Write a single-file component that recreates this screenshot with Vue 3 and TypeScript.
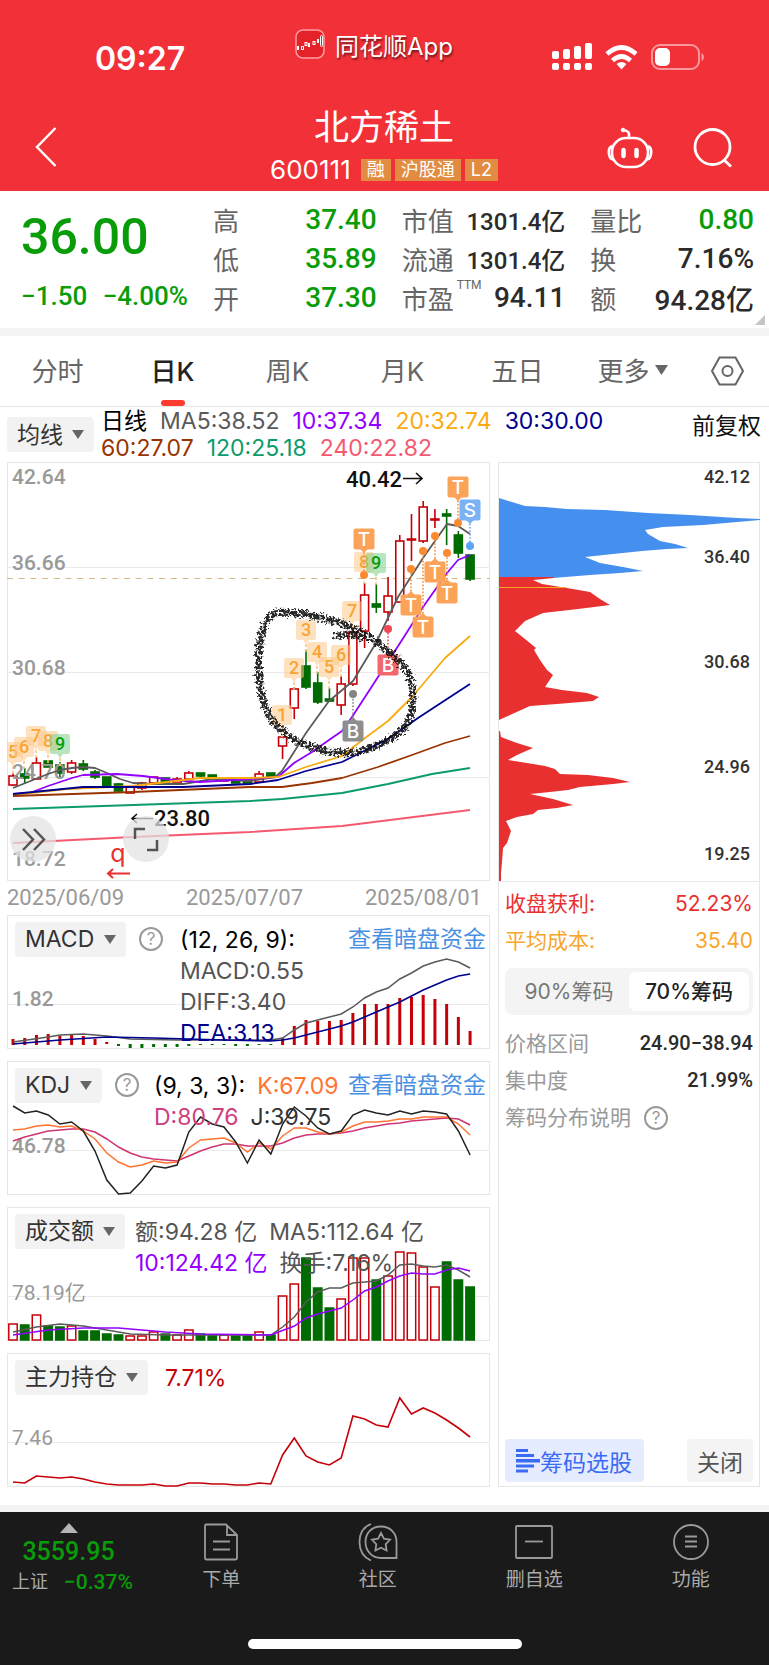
<script setup lang="ts">
import { ref } from 'vue'

type Pair = [number, number]

const STEP = 11.72
const x = (i: number): number => 6 + i * STEP
const series = (pts: Pair[]): string => pts.map(([i, y]) => `${x(i).toFixed(1)},${y}`).join(' ')
const run = (ys: number[]): string => series(ys.map((y, i): Pair => [i, y]))

const tabs: string[] = ['分时', '日K', '周K', '月K', '五日', '更多']
const activeTab = ref('日K')
const chipRange = ref('70')

const stats = [
  [['高', '37.40', 'down'], ['低', '35.89', 'down'], ['开', '37.30', 'down']],
  [['市值', '1301.4亿', 'small'], ['流通', '1301.4亿', 'small'], ['市盈', '94.11', '']],
  [['量比', '0.80', 'down'], ['换', '7.16%', ''], ['额', '94.28亿', '']],
]

// up flag, body top, body bottom, high, low
const candles: [boolean, number, number, number, number][] = [
  [true, 314, 323, 311, 324], [false, 312, 316, 306, 321], [true, 301, 317, 295, 317],
  [false, 299, 305, 299, 305], [false, 303, 311, 300, 315], [true, 301, 310, 298, 312],
  [false, 302, 307, 298, 309], [false, 310, 315, 308, 317], [false, 315, 324, 315, 324],
  [false, 322, 329, 321, 330], [true, 325, 331, 325, 331], [true, 321, 326, 320, 328],
  [true, 315, 321, 315, 321], [false, 316, 322, 316, 322], [true, 317, 321, 315, 321],
  [true, 311, 317, 309, 317], [false, 311, 314, 311, 315], [false, 313, 317, 313, 317],
  [true, 317, 319, 317, 319], [false, 317, 321, 317, 321], [false, 318, 321, 318, 321],
  [true, 312, 320, 309, 320], [false, 311, 315, 311, 315], [true, 275, 284, 274, 297],
  [true, 227, 246, 225, 257], [false, 204, 225, 188, 227], [false, 221, 240, 210, 242],
  [false, 237, 239, 226, 240], [true, 222, 243, 214, 253], [true, 170, 222, 170, 224],
  [true, 133, 169, 121, 186], [false, 142, 145, 122, 151], [true, 134, 150, 115, 159],
  [true, 79, 140, 73, 140], [true, 77, 78, 52, 99], [true, 45, 79, 39, 81],
  [true, 57, 58, 47, 66], [false, 52, 54, 47, 83], [false, 73, 91, 69, 96],
  [false, 93, 117, 93, 119],
]

const averages = [
  { color: '#5a5a5a', pts: '6,326 41,312 53,308 65,306 76,305 88,306 100,311 113,317 126,321 143,322 176,322 206,317 243,319 268,315 275,309 299,271 322,239 346,219 369,181 391,135 416,96 440,62 451,64 463,72' },
  { color: '#9400ff', pts: '6,332 23,331 41,324 65,316 76,313 110,312 136,314 166,318 193,320 243,317 271,315 287,301 305,290 322,278 335,269 345,255 358,235 371,215 395,178 416,145 440,111 451,98 463,93' },
  { color: '#f9ab10', pts: '6,333 60,327 126,324 160,320 193,316 243,316 271,315 299,305 335,294 358,276 381,259 405,235 438,196 463,174' },
  { color: '#00008f', pts: '6,332 76,325 126,325 176,325 243,322 271,318 299,309 335,300 381,277 411,256 440,237 463,222' },
  { color: '#993300', pts: '6,334 126,330 243,325 275,325 305,321 335,316 371,305 405,293 438,281 463,274' },
  { color: '#0c9b6a', pts: '6,347 126,343 243,339 275,337 335,331 381,322 425,312 463,306' },
  { color: '#f5596f', pts: '6,381 126,375 243,370 335,364 391,357 463,348' },
]

const legend: [string, string][] = [
  ['日线', '#000'], ['MA5:38.52', '#5a5a5a'], ['10:37.34', '#9400ff'], ['20:32.74', '#f9ab10'],
  ['30:30.00', '#00008f'], ['60:27.07', '#993300'], ['120:25.18', '#0c9b6a'], ['240:22.82', '#f5596f'],
]

const axis: [string, number][] = [['42.64', 22], ['36.66', 108], ['30.68', 213], ['24.70', 317], ['18.72', 404]]

const counts: [number, number, number][] = [
  [5, 6, 290], [6, 17, 285], [7, 29, 274], [8, 41, 279], [9, 53, 282],
  [1, 275, 253], [2, 287, 206], [3, 299, 168], [4, 310, 190], [5, 322, 205],
  [6, 334, 193], [7, 345, 149], [8, 357, 100], [9, 369, 101],
]

const trades: { t: string; x: number; y: number; dot: number; c: string; d: string }[] = [
  { t: 'T', x: 357, y: 77, dot: 113, c: '#fca35a', d: '#fb8b32' },
  { t: 'T', x: 451, y: 25, dot: 61, c: '#fca35a', d: '#fb8b32' },
  { t: 'S', x: 463, y: 48, dot: 84, c: '#7bb1f5', d: '#5da3f5' },
  { t: 'T', x: 404, y: 143, dot: 107, c: '#fca35a', d: '#fb8b32' },
  { t: 'T', x: 416, y: 165, dot: 89, c: '#fca35a', d: '#fb8b32' },
  { t: 'T', x: 428, y: 110, dot: 74, c: '#fca35a', d: '#fb8b32' },
  { t: 'T', x: 440, y: 131, dot: 91, c: '#fca35a', d: '#fb8b32' },
  { t: 'B', x: 381, y: 203, dot: 167, c: '#f2686c', d: '#f04855' },
  { t: 'B', x: 346, y: 269, dot: 232, c: '#8e8e8e', d: '#858585' },
]

const chipAxis: [string, number][] = [['42.12', 21], ['36.40', 101], ['30.68', 206], ['24.96', 311], ['19.25', 398]]

const macdBars: [number, number, boolean][] = [
  [124, 130, true], [123, 130, true], [120, 130, true], [119, 130, true], [121, 130, true], [120, 130, true],
  [121, 130, true], [124, 130, true], [127, 129, true],
  [129, 131, false], [129, 133, false], [129, 133, false], [129, 132, false], [129, 132, false], [129, 132, false],
  [129, 131, false], [129, 130, false], [129, 130, false], [129, 130, false], [129, 131, false], [129, 131, false],
  [129, 130, false], [129, 130, false],
  [123, 130, true], [111, 130, true], [105, 130, true], [106, 130, true], [106, 130, true], [105, 130, true],
  [98, 130, true], [89, 130, true], [89, 130, true], [89, 130, true], [83, 130, true], [82, 130, true],
  [80, 130, true], [84, 130, true], [89, 130, true], [102, 130, true], [116, 130, true],
]
const diff = series([[0, 127], [3, 122], [4, 120], [6, 119], [8, 121], [10, 124], [14, 125], [22, 125], [23, 123], [24, 115], [25, 108], [26, 105], [27, 102], [28, 99], [29, 92], [30, 83], [31, 77], [32, 73], [33, 64], [34, 58], [35, 51], [36, 47], [37, 44], [38, 47], [39, 53]])
const dea = series([[0, 129], [4, 125], [8, 122], [12, 123], [18, 125], [22, 126], [23, 125], [24, 123], [25, 120], [26, 117], [27, 114], [28, 111], [29, 107], [30, 102], [31, 97], [32, 92], [33, 87], [34, 81], [35, 75], [36, 70], [37, 65], [38, 61], [39, 59]])

const kdjJ = run([45, 52, 50, 54, 63, 61, 70, 90, 119, 133, 132, 120, 105, 107, 104, 71, 56, 63, 66, 81, 102, 79, 93, 63, 46, 55, 67, 73, 70, 54, 49, 52, 54, 50, 53, 50, 51, 53, 70, 94])
const kdjK = run([69, 68, 65, 64, 66, 65, 70, 78, 92, 101, 106, 104, 100, 102, 101, 87, 79, 78, 77, 82, 91, 82, 88, 75, 67, 67, 71, 73, 71, 65, 61, 61, 60, 58, 58, 56, 56, 56, 63, 74])
const kdjD = run([80, 76, 73, 70, 69, 68, 68, 71, 78, 86, 92, 96, 98, 99, 100, 95, 90, 86, 83, 83, 85, 85, 85, 82, 77, 74, 73, 73, 72, 70, 67, 65, 63, 62, 60, 59, 58, 57, 58, 64])

const volumeTops = [117, 118, 108, 119, 120, 119, 124, 124, 127, 128, 129, 129, 125, 127, 128, 123, 127, 128, 128, 129, 129, 125, 128, 89, 77, 51, 81, 101, 92, 51, 51, 73, 69, 45, 46, 60, 80, 55, 73, 80]
const volumeUp = new Set([0, 2, 5, 10, 11, 12, 14, 15, 18, 21, 23, 24, 28, 29, 30, 32, 33, 34, 35, 36])
const volMa5 = series([[0, 125], [2, 120], [4, 117], [6, 119], [8, 123], [10, 127], [13, 128], [22, 128], [23, 120], [24, 110], [25, 95], [26, 85], [27, 81], [28, 81], [29, 76], [30, 75], [31, 74], [32, 68], [33, 58], [34, 57], [35, 59], [36, 60], [37, 58], [38, 63], [39, 70]])
const volMa10 = series([[0, 128], [3, 123], [6, 121], [9, 121], [11, 123], [13, 125], [16, 127], [22, 128], [24, 119], [25, 111], [26, 107], [27, 104], [28, 101], [29, 93], [30, 84], [31, 80], [32, 74], [33, 69], [34, 66], [35, 67], [36, 67], [37, 63], [38, 61], [39, 64]])

const holding = run([129, 130, 123, 124, 125, 124, 126, 129, 131, 132, 132, 132, 131, 133, 133, 130, 130, 131, 131, 132, 132, 130, 131, 102, 85, 103, 109, 112, 105, 63, 66, 72, 74, 45, 61, 55, 60, 67, 75, 84])
</script>

<template>
  <div class="page">
    <header class="top">
      <div class="status">
        <span class="clock">09:27</span>
        <div class="app">
          <svg class="app-icon" viewBox="0 0 30 30" aria-hidden="true">
            <rect x="1" y="1" width="28" height="28" rx="7" fill="#e32229" stroke="#ff9ea0" stroke-width="1.5" />
            <g fill="#fff"><rect x="2" y="17" width="2" height="4" /><rect x="13" y="14" width="2" height="4" /><rect x="22" y="10" width="2" height="4" /></g>
            <g fill="none" stroke="#fff"><rect x="6.5" y="17.500" width="2" height="3" /><rect x="10" y="13.500" width="2" height="3" /><rect x="18" y="12.500" width="2" height="3" /><rect x="25.500" y="6.500" width="2" height="11" rx="1" /></g>
          </svg>
          <span>同花顺App</span>
        </div>
        <div class="signals">
          <svg width="40" height="28" viewBox="0 0 40 28" fill="#fff" aria-hidden="true">
            <rect x="0" y="8" width="7" height="8" rx="2" /><rect x="11" y="6" width="7" height="10" rx="2" />
            <rect x="22" y="3" width="7" height="13" rx="2" /><rect x="33" y="0" width="7" height="16" rx="2" />
            <rect x="0" y="20" width="7" height="7" rx="2" /><rect x="11" y="20" width="7" height="7" rx="2" />
            <rect x="22" y="20" width="7" height="7" rx="2" /><rect x="33" y="20" width="7" height="7" rx="2" />
          </svg>
          <svg width="33" height="25" viewBox="0 0 33 25" fill="none" stroke="#fff" stroke-width="4.600" aria-hidden="true">
            <path d="M2 9Q16.500-4 31 9" /><path d="M7.500 15.500Q16.500 7.500 25.500 15.500" />
            <path d="M11.500 19Q16.500 15 21.500 19L16.500 24.500Z" fill="#fff" stroke="none" />
          </svg>
          <svg width="54" height="26" viewBox="0 0 54 26" aria-hidden="true">
            <rect x="1" y="1" width="47" height="24" rx="8" fill="none" stroke="#fff" stroke-opacity=".5" stroke-width="2" />
            <rect x="4" y="4" width="15" height="18" rx="5" fill="#fff" />
            <path d="M50.500 9Q53 10 53 13T50.500 17Z" fill="#fff" fill-opacity=".5" />
          </svg>
        </div>
      </div>
      <div class="nav">
        <button class="plain back" aria-label="返回">
          <svg width="22" height="40" viewBox="0 0 22 40" fill="none" stroke="#fff" stroke-width="2.500"><path d="M20.500 1L2 20L20.500 39" /></svg>
        </button>
        <div class="title">
          <h1>北方稀土</h1>
          <p><span class="code">600111</span><i>融</i><i>沪股通</i><i>L2</i></p>
        </div>
        <div class="actions">
          <button class="plain" aria-label="智能助手">
            <svg width="46" height="42" viewBox="0 0 46 42" fill="none" stroke="#fff" stroke-width="2.600">
              <rect x="5" y="11" width="36" height="29" rx="14" /><path d="M5 19Q1 21 2 27T6 32M41 19Q45 21 44 27T40 32" />
              <path d="M22 11V7Q22 4 16 3" /><circle cx="16" cy="3" r="1.800" fill="#fff" stroke-width="1" />
              <path d="M16.500 23V29M29.500 23V29" stroke-width="4.500" stroke-linecap="round" />
            </svg>
          </button>
          <button class="plain" aria-label="搜索">
            <svg width="40" height="40" viewBox="0 0 40 40" fill="none" stroke="#fff" stroke-width="2.800"><circle cx="19.500" cy="19" r="17.500" /><path d="M31 32L38 38.500" /></svg>
          </button>
        </div>
      </div>
    </header>

    <section class="quote">
      <div class="price">
        <strong>36.00</strong>
        <p><span>−1.50</span><span>−4.00%</span></p>
      </div>
      <dl v-for="(col, c) in stats" :key="c">
        <div v-for="[k, v, kind] in col" :key="k">
          <dt>{{ k }}<sup v-if="k === '市盈'">TTM</sup></dt>
          <dd :class="kind">{{ v }}</dd>
        </div>
      </dl>
      <span class="corner"></span>
    </section>

    <nav class="tabs">
      <button v-for="t in tabs" :key="t" class="plain tab" :class="{ active: t === activeTab }" @click="activeTab = t">
        {{ t }}<svg v-if="t === '更多'" width="13" height="10" viewBox="0 0 13 10" fill="#666"><path d="M0 0H13L6.500 10Z" /></svg>
      </button>
      <button class="plain settings" aria-label="设置">
        <svg width="35" height="30" viewBox="0 0 35 30" fill="none" stroke="#666" stroke-width="2"><path d="M9.500 1.500H25.500L33 15L25.500 28.500H9.500L2 15Z" /><circle cx="17.500" cy="15" r="5" /></svg>
      </button>
    </nav>

    <div class="legend">
      <div class="drop"><select aria-label="均线类型"><option>均线</option></select><svg viewBox="0 0 12 9"><path d="M0 0H12L6 9Z" /></svg></div>
      <p class="legend-list"><span v-for="[label, color] in legend" :key="label" :style="{ color }">{{ label }}</span></p>
      <button class="plain adjust">前复权</button>
    </div>

    <main class="board">
      <div class="charts">
        <section class="frame kline">
          <svg class="plot" viewBox="0 0 483 419" role="img" aria-label="北方稀土日K线图">
            <defs>
              <filter id="rough" x="-10%" y="-10%" width="120%" height="120%">
                <feTurbulence type="fractalNoise" baseFrequency="0.4" numOctaves="3" seed="4" result="n" />
                <feDisplacementMap in="SourceGraphic" in2="n" scale="9" xChannelSelector="R" yChannelSelector="G" result="d" />
                <feColorMatrix in="n" type="matrix" values="0 0 0 0 0  0 0 0 0 0  0 0 0 0 0  0 0 6 0 -2" result="m" />
                <feComposite in="d" in2="m" operator="in" />
                <feGaussianBlur stdDeviation="0.4" />
              </filter>
            </defs>
            <g class="grid"><path d="M0 105.500H483M0 210.500H483M0 315.500H483" /></g>
            <path d="M0 116.500H483" stroke="#d6ba8a" stroke-width="1.200" stroke-dasharray="6 5.700" />
            <g v-for="([up, top, bottom, high, low], i) in candles" :key="i" :stroke="up ? '#c50008' : '#006b00'" stroke-width="1.600">
              <path :d="`M${x(i)} ${high}V${top}M${x(i)} ${bottom}V${low}`" />
              <rect :x="x(i) - 4" :y="top" width="8" :height="bottom - top" :fill="up ? '#fff' : '#006b00'" />
            </g>
            <g class="axis"><text v-for="[t, y] in axis" :key="t" x="5" :y="y">{{ t }}</text></g>
            <g fill="none" stroke-width="1.800" stroke-linejoin="round"><polyline v-for="a in averages" :key="a.color" :points="a.pts" :stroke="a.color" /></g>
            <g v-for="([n, cx, cy], i) in counts" :key="'n' + i" class="count" :class="{ nine: n === 9 }">
              <path :d="`M${cx - 8} ${cy - 10}h16q2 0 2 2v16q0 2-2 2h-5l-3 4l-3-4h-5q-2 0-2-2v-16q0-2 2-2Z`" />
              <path class="stem" :d="`M${cx} ${cy + 14}v10`" />
              <text :x="cx" :y="cy + 6">{{ n }}</text>
            </g>
            <g v-for="(m, i) in trades" :key="'t' + i" class="trade">
              <path :d="`M${m.x} ${m.y}V${m.dot}`" :stroke="m.d" stroke-width="1.600" stroke-dasharray="1.600 1.800" />
              <circle :cx="m.x" :cy="m.dot" r="4" :fill="m.d" />
              <rect :x="m.x - 10.500" :y="m.y - 10.500" width="21" height="21" rx="2" :fill="m.c" />
              <path :d="m.dot > m.y ? `M${m.x - 4} ${m.y + 10}h8l-4 4Z` : `M${m.x - 4} ${m.y - 10}h8l-4-4Z`" :fill="m.c" />
              <text :x="m.x" :y="m.y + 7">{{ m.t }}</text>
            </g>
            <path class="ink" filter="url(#rough)" d="M330 174Q345 170 353 176M268 151C278 149 296 151 311 155C327 159 343 163 355 171C372 180 392 196 401 211C407 224 407 240 404 252C400 270 382 281 355 289C338 293 318 290 298 283C283 276 270 266 263 255C254 238 250 215 252 190C253 176 256 157 268 151" />
            <g class="peak">
              <text x="339" y="25">40.42</text><path d="M396 16.500H415M409 11L415 16.500L409 22" />
              <text x="147" y="364">23.80</text><path d="M146 356.500H125M130 352L125 356.500L130 361" />
            </g>
            <g class="event"><text x="111" y="400">q</text><path d="M123 411.500H101M106 407L101 411.500L106 416" /></g>
          </svg>
          <button class="plain round expand" aria-label="展开">
            <svg viewBox="0 0 46 46"><path d="M13 13L23 23.500L13 34M24 13L34 23.500L24 34" /></svg>
          </button>
          <button class="plain round full" aria-label="全屏">
            <svg viewBox="0 0 46 46"><path d="M12 23V13H22M24 34H34V24" /></svg>
          </button>
        </section>
        <div class="dates"><span>2025/06/09</span><span>2025/07/07</span><span>2025/08/01</span></div>

        <section class="frame sub">
          <svg class="plot" viewBox="0 0 483 134" aria-hidden="true">
            <path class="grid" d="M0 89.500H483" />
            <rect v-for="([a, b, up], i) in macdBars" :key="i" :x="x(i) - 1.500" :y="a" width="3" :height="b - a" :fill="up ? '#c50008' : '#006b00'" />
            <g fill="none" stroke-width="1.500"><polyline :points="diff" stroke="#5a5a5a" /><polyline :points="dea" stroke="#00008f" /></g>
            <text class="axis" x="5" y="91">1.82</text>
          </svg>
          <div class="head">
            <div class="drop"><select aria-label="指标一"><option>MACD</option></select><svg viewBox="0 0 12 9"><path d="M0 0H12L6 9Z" /></svg></div>
            <button class="plain help" aria-label="MACD说明">?</button>
            <div class="values column">
              <span class="ink-black">(12, 26, 9):</span><span>MACD:0.55</span><span>DIFF:3.40</span><span class="navy">DEA:3.13</span>
            </div>
            <a href="#dark">查看暗盘资金</a>
          </div>
        </section>

        <section class="frame sub">
          <svg class="plot" viewBox="0 0 483 134" aria-hidden="true">
            <path class="grid" d="M0 89.500H483" />
            <text class="axis" x="5" y="92">46.78</text>
            <g fill="none" stroke-width="1.500"><polyline :points="kdjD" stroke="#cf3473" /><polyline :points="kdjK" stroke="#ff7430" /><polyline :points="kdjJ" stroke="#222" /></g>
          </svg>
          <div class="head">
            <div class="drop"><select aria-label="指标二"><option>KDJ</option></select><svg viewBox="0 0 12 9"><path d="M0 0H12L6 9Z" /></svg></div>
            <button class="plain help" aria-label="KDJ说明">?</button>
            <div class="values tight">
              <p><span class="ink-black">(9, 3, 3):</span><span class="orange">K:67.09</span></p>
              <p><span class="magenta">D:80.76</span><span class="dark">J:39.75</span></p>
            </div>
            <a href="#dark">查看暗盘资金</a>
          </div>
        </section>

        <section class="frame sub">
          <svg class="plot" viewBox="0 0 483 134" aria-hidden="true">
            <path class="grid" d="M0 89.500H483" />
            <text class="axis light" x="5" y="93">78.19亿</text>
            <rect v-for="(top, i) in volumeTops" :key="i" :x="x(i) - 4.200" :y="top" width="8.400" :height="133 - top" :fill="volumeUp.has(i) ? 'none' : '#006b00'" :stroke="volumeUp.has(i) ? '#c50008' : '#006b00'" stroke-width="1.500" />
            <g fill="none" stroke-width="1.500"><polyline :points="volMa5" stroke="#5a5a5a" /><polyline :points="volMa10" stroke="#9400ff" /></g>
          </svg>
          <div class="head">
            <div class="drop"><select aria-label="指标三"><option>成交额</option></select><svg viewBox="0 0 12 9"><path d="M0 0H12L6 9Z" /></svg></div>
            <div class="values near">
              <p><span>额:94.28 亿</span><span>MA5:112.64 亿</span></p>
              <p><span class="purple">10:124.42 亿</span><span>换手:7.16%</span></p>
            </div>
          </div>
        </section>

        <section class="frame sub">
          <svg class="plot" viewBox="0 0 483 134" aria-hidden="true">
            <path class="grid" d="M0 89.500H483" />
            <text class="axis light" x="5" y="92">7.46</text>
            <polyline :points="holding" fill="none" stroke="#c50008" stroke-width="1.600" />
          </svg>
          <div class="head">
            <div class="drop"><select aria-label="指标四"><option>主力持仓</option></select><svg viewBox="0 0 12 9"><path d="M0 0H12L6 9Z" /></svg></div>
            <div class="values wide"><span class="crimson">7.71%</span></div>
          </div>
        </section>
      </div>

      <aside class="frame chips">
        <svg class="plot" viewBox="0 0 262 420" role="img" aria-label="筹码分布">
          <g transform="translate(1 0)">
            <path fill="#4590ee" d="M0 36L26 44L46 45L68 47L106 48L149 51L191 53L238 56L261 57V58L238 60L204 63L164 65L146 68L149 72L161 79L176 82L189 86L168 87L143 89L114 92L86 95L101 101L124 105L144 109L121 111L91 113L54 116H0Z" />
            <path fill="#e83030" d="M0 115H55V116L34 118L43 122L68 126L91 130L101 137L111 143L79 147L44 151L26 159L16 169L26 177L37 186L35 188L41 198L48 208L54 213L46 225L63 228L88 231L100 235L94 239L58 242L31 244L11 253L0 258ZM0 269H1L2 275L18 281L34 286L18 293L9 298L28 301L46 304L56 307L61 312L89 313L114 316L131 320L114 322L81 325L69 328L51 330L31 332L54 337L74 343L58 346L39 348L34 352L18 355L7 359L12 369L8 381L4 386L3 400L2 411V420H0Z" />
            <path d="M0 125.500H67" stroke="#f5a623" />
          </g>
          <g class="chip-axis"><text v-for="[t, y] in chipAxis" :key="t" x="252" :y="y">{{ t }}</text></g>
          <path class="grid" d="M0 419.500H262" />
        </svg>
        <div class="chip-body">
          <p class="row red"><span>收盘获利:</span><b>52.23%</b></p>
          <p class="row amber"><span>平均成本:</span><b>35.40</b></p>
          <div class="segment">
            <label :class="{ on: chipRange === '90' }"><input v-model="chipRange" type="radio" name="range" value="90">90%筹码</label>
            <label :class="{ on: chipRange === '70' }"><input v-model="chipRange" type="radio" name="range" value="70">70%筹码</label>
          </div>
          <p class="row"><span>价格区间</span><em>24.90−38.94</em></p>
          <p class="row"><span>集中度</span><em>21.99%</em></p>
          <p class="row start"><span>筹码分布说明</span><button class="plain help" aria-label="筹码分布说明">?</button></p>
          <div class="buttons">
            <button class="pick">
              <svg width="24" height="24" viewBox="0 0 24 24" fill="#3a6bf5"><path d="M0 0H12V3H0ZM0 5H18V8H0ZM0 10H24V13.500H0ZM0 15.500H18V18.500H0ZM0 20.500H12V23.500H0Z" /></svg>筹码选股
            </button>
            <button class="close">关闭</button>
          </div>
        </div>
      </aside>
    </main>

    <footer class="bottom">
      <div class="bar">
        <button class="plain index">
          <svg width="18" height="10" viewBox="0 0 18 10" fill="#b5b5b5"><path d="M9 0L18 10H0Z" /></svg>
          <strong>3559.95</strong>
          <span><small>上证</small><b>−0.37%</b></span>
        </button>
        <button class="plain item">
          <svg width="40" height="38" viewBox="0 0 40 38"><path d="M5 1.500H25L36 12V35Q36 36.500 34 36.500H5.500Q4 36.500 4 35V3Q4 1.500 5 1.500ZM26 2V12H36M12 18.500H29M12 26.500H29" /></svg>
          下单
        </button>
        <button class="plain item">
          <svg width="40" height="38" viewBox="0 0 40 38"><path d="M23 3.500C13 3.500 7.500 10.500 7.500 19C7.500 28 14 35 23 35H38.500V19C38.500 10 32 3.500 23 3.500ZM13 1C5 4 1.500 11 1.500 19S5 34 13 37.500M23 10L25.900 15.700L32 16.700L27.700 21.200L28.600 27.500L23 24.800L17.400 27.500L18.300 21.200L14 16.700L20.100 15.700Z" /></svg>
          社区
        </button>
        <button class="plain item">
          <svg width="40" height="38" viewBox="0 0 40 38"><rect x="2" y="3" width="36" height="32" rx="1" /><path d="M11 18.500H29" /></svg>
          删自选
        </button>
        <button class="plain item">
          <svg width="40" height="38" viewBox="0 0 40 38"><circle cx="20" cy="19" r="17" /><path d="M14 13.500H26M14 18.500H26M14 23.500H26" /></svg>
          功能
        </button>
      </div>
      <div class="home"></div>
    </footer>
  </div>
</template>

<style>
body {
  margin: 0;
  background: #fff;
}
</style>

<style scoped>
.page {
  font-family: Inter, "Noto Sans CJK SC", sans-serif;
  font-size: 23px;
  color: #555;
  background: #fff;
}
p, h1, dl, dd {
  margin: 0;
}
i, em {
  font-style: normal;
}
svg {
  display: block;
}
.plain {
  padding: 0;
  border: 0;
  background: none;
  color: inherit;
  font: inherit;
}
.top {
  height: 191px;
  background: #f23038;
  color: #fff;
}
.status {
  display: flex;
  align-items: center;
  height: 80px;
  padding: 18px 64px 0 95px;
  box-sizing: border-box;
}
.clock {
  width: 200px;
  padding-top: 18px;
  font-size: 32px;
  font-weight: 600;
}
.app {
  display: flex;
  align-items: center;
  gap: 10px;
  margin-bottom: 10px;
  font-size: 24px;
  text-shadow: 1px 2px 2px #0008;
}
.app-icon {
  width: 30px;
  height: 30px;
}
.signals {
  display: flex;
  align-items: center;
  gap: 13px;
  margin-left: auto;
  padding-top: 16px;
}
.nav {
  display: grid;
  grid-template-columns: 1fr auto 1fr;
  padding: 22px 36px 0 35px;
}
.back {
  justify-self: start;
  margin-top: 25px;
  height: 40px;
}
.title {
  text-align: center;
}
.title h1 {
  font-size: 35px;
  font-weight: 400;
  line-height: 50px;
}
.title p {
  display: flex;
  align-items: center;
  gap: 4px;
  line-height: 36px;
}
.code {
  margin-right: 6px;
  font-size: 26px;
}
.title i {
  padding: 0 6px;
  background: #e28c42;
  font-size: 18px;
  line-height: 22px;
}
.actions {
  display: flex;
  justify-content: flex-end;
  align-items: center;
  gap: 40px;
  height: 92px;
}

.quote {
  position: relative;
  display: grid;
  grid-template-columns: 167px repeat(3, 1fr);
  gap: 25px;
  height: 145px;
  padding: 9px 15px 0 21px;
  box-sizing: border-box;
  border-bottom: 8px solid #f4f4f4;
  font-family: Roboto, "Noto Sans CJK SC", sans-serif;
}
.price {
  color: #089c08;
  white-space: nowrap;
}
.price strong {
  display: block;
  font-size: 50px;
  font-weight: 500;
  line-height: 74px;
}
.price p {
  display: flex;
  justify-content: space-between;
  font-size: 26px;
  font-weight: 500;
  line-height: 44px;
}
.quote dl div {
  display: flex;
  justify-content: space-between;
  align-items: center;
  height: 39px;
  white-space: nowrap;
}
.quote dt {
  color: #666;
  font-size: 26px;
}
.quote sup {
  position: absolute;
  margin-left: 3px;
  font-size: 12px;
  line-height: 12px;
}
.quote dd {
  color: #2b2b2b;
  font-size: 28px;
  font-weight: 500;
}
.quote dd.down {
  color: #089c08;
}
.quote dd.small {
  font-size: 24px;
}
.corner {
  position: absolute;
  right: 4px;
  bottom: 3px;
  border: 5px solid;
  border-color: transparent #c4c4c4 #c4c4c4 transparent;
}

.tabs {
  display: flex;
  height: 71px;
  box-sizing: border-box;
  border-bottom: 1px solid #e6e6e6;
}
.tab {
  position: relative;
  flex: 1;
  display: flex;
  justify-content: center;
  align-items: center;
  gap: 5px;
  padding-bottom: 3px;
  color: #666;
  font-size: 26px;
}
.tab.active {
  color: #222;
  font-weight: 500;
}
.tab.active::after {
  content: "";
  position: absolute;
  bottom: 0;
  width: 24px;
  height: 6px;
  border-radius: 3px;
  background: #ff3b30;
}
.settings {
  display: flex;
  justify-content: center;
  align-items: center;
  width: 79px;
  padding: 0 4px 1px 0;
  box-sizing: border-box;
}

.legend {
  display: flex;
  align-items: center;
  gap: 7px;
  height: 55px;
  padding: 0 8px 0 7px;
}
.legend-list {
  flex: 1;
  display: flex;
  flex-wrap: wrap;
  column-gap: 13px;
  max-width: 560px;
  line-height: 27px;
}
.legend-list span {
  white-space: nowrap;
}
.adjust {
  margin: 0 0 18px auto;
  color: #111;
  line-height: 28px;
  white-space: nowrap;
}
.drop {
  position: relative;
  flex: none;
}
.drop select {
  display: block;
  height: 35px;
  padding: 0 31px 0 10px;
  border: 0;
  border-radius: 4px;
  appearance: none;
  background: #f2f2f2;
  color: #333;
  font: inherit;
}
.drop svg {
  position: absolute;
  right: 10px;
  top: 13px;
  width: 12px;
  height: 9px;
  fill: #666;
  pointer-events: none;
}

.board {
  display: grid;
  grid-template-columns: 483fr 262fr;
  gap: 8px;
  padding: 0 9px 18px 7px;
  border-bottom: 7px solid #f3f3f3;
}
.charts {
  min-width: 0;
}
.frame {
  position: relative;
  box-shadow: inset 0 0 0 1px #e6e6e6;
}
.plot {
  width: 100%;
  height: auto;
}
.grid {
  fill: none;
  stroke: #eaeaea;
}
.axis {
  fill: #999;
  font-family: Roboto, "Noto Sans CJK SC", sans-serif;
  font-size: 21px;
  font-weight: 500;
}
.axis.light {
  font-weight: 400;
}
.count path {
  fill: #fdc98a;
  fill-opacity: .55;
}
.count .stem {
  stroke: #fbc174;
  stroke-width: 1.500;
  stroke-dasharray: 3 2;
}
.count text {
  fill: #f9a536;
  font-family: Roboto, sans-serif;
  font-size: 18px;
  font-weight: 500;
  text-anchor: middle;
}
.count.nine path {
  fill: #7fcf88;
}
.count.nine text {
  fill: #089c08;
}
.trade text {
  fill: #fff;
  font-size: 19px;
  font-weight: 500;
  text-anchor: middle;
}
.ink {
  fill: none;
  stroke: #111;
  stroke-opacity: .9;
  stroke-width: 7;
  stroke-linecap: round;
}
.peak text {
  fill: #111;
  font-family: Roboto, sans-serif;
  font-size: 22px;
  font-weight: 500;
}
.peak path {
  fill: none;
  stroke: #111;
  stroke-width: 1.600;
}
.event text {
  fill: #e93030;
  font-size: 25px;
  text-anchor: middle;
}
.event path {
  fill: none;
  stroke: #e93030;
  stroke-width: 2;
}
.round {
  position: absolute;
  bottom: 19px;
  width: 46px;
  height: 46px;
  border-radius: 50%;
  background: #e2e2e2bb;
}
.round svg {
  fill: none;
  stroke: #555;
  stroke-width: 2.500;
}
.expand {
  left: 3px;
}
.full {
  left: 24%;
}
.dates {
  display: flex;
  justify-content: space-between;
  padding-right: 8px;
  color: #999;
  font-family: Roboto, sans-serif;
  font-size: 22px;
  line-height: 34px;
}
.sub {
  min-height: 134px;
  margin-bottom: 12px;
}
.sub:last-child {
  margin-bottom: 0;
}
.head {
  position: absolute;
  inset: 7px 4px auto 8px;
  display: flex;
  align-items: flex-start;
  line-height: 35px;
}
.help {
  flex: none;
  width: 24px;
  height: 24px;
  margin: 5px 0 0 13px;
  box-sizing: border-box;
  border: 2px solid #999;
  border-radius: 50%;
  color: #999;
  font-size: 17px;
  line-height: 20px;
}
.values {
  margin-left: 17px;
  line-height: 31px;
  padding-top: 3px;
  white-space: nowrap;
}
.values.tight {
  margin-left: 15px;
}
.values.near {
  margin-left: 10px;
}
.values.column {
  display: flex;
  flex-direction: column;
}
.values p {
  display: flex;
  gap: 12px;
}
.head a {
  margin-left: auto;
  color: #4a90e2;
  text-decoration: none;
  white-space: nowrap;
}
.ink-black {
  color: #000;
}
.navy {
  color: #00008f;
}
.orange {
  color: #ff7430;
}
.magenta {
  color: #cf3f80;
}
.dark {
  color: #333;
}
.purple {
  color: #9400ff;
}
.crimson {
  color: #c50008;
}

.chips {
  display: flex;
  flex-direction: column;
}
.chip-axis text {
  fill: #333;
  font-family: Roboto, sans-serif;
  font-size: 18px;
  font-weight: 500;
  text-anchor: end;
}
.chip-body {
  flex: 1;
  display: flex;
  flex-direction: column;
  padding: 3px 7px 5px;
}
.row {
  display: flex;
  justify-content: space-between;
  align-items: center;
  color: #999;
  font-size: 21px;
  line-height: 37px;
  white-space: nowrap;
}
.row b {
  font-weight: 400;
}
.row em {
  color: #2b2b2b;
  font-family: Roboto, sans-serif;
  font-size: 20px;
  font-weight: 500;
}
.row.red {
  color: #e83030;
}
.row.amber {
  color: #f9a52b;
}
.row.start {
  justify-content: flex-start;
}
.row .help {
  margin: 0 0 0 13px;
}
.segment {
  display: flex;
  margin: 9px 0 10px;
  padding: 4px;
  border-radius: 8px;
  background: #f4f4f4;
}
.segment label {
  flex: 1;
  border-radius: 7px;
  color: #777;
  font-size: 21px;
  line-height: 39px;
  text-align: center;
  white-space: nowrap;
}
.segment .on {
  background: #fff;
  color: #222;
  font-weight: 500;
}
.segment input {
  position: absolute;
  opacity: 0;
  margin: 0;
}
.buttons {
  display: flex;
  justify-content: space-between;
  margin-top: auto;
}
.buttons button {
  display: flex;
  align-items: center;
  height: 43px;
  border: 0;
  border-radius: 4px;
  font: inherit;
}
.pick {
  padding: 0 12px 0 11px;
  background: #e6ecff;
  color: #3a6bf5;
}
.close {
  padding: 0 10px;
  background: #f4f4f4;
  color: #555;
}

.bottom {
  height: 153px;
  box-sizing: border-box;
  padding-top: 11px;
  background: #1a1a1a;
  color: #aaa;
}
.bar {
  display: flex;
}
.index {
  display: flex;
  flex-direction: column;
  align-items: center;
  width: 143px;
  padding-right: 6px;
  box-sizing: border-box;
  font-family: Roboto, "Noto Sans CJK SC", sans-serif;
}
.index strong {
  color: #089c08;
  font-size: 25px;
  font-weight: 500;
  line-height: 36px;
  margin-top: 1px;
}
.index span {
  display: flex;
  align-items: center;
  gap: 16px;
  padding-left: 8px;
  line-height: 24px;
}
.index small {
  font-size: 18px;
}
.index b {
  color: #089c08;
  font-size: 21px;
  font-weight: 500;
}
.item {
  flex: 1;
  display: flex;
  flex-direction: column;
  align-items: center;
  gap: 5px;
  font-size: 19px;
  line-height: 28px;
}
.item svg {
  fill: none;
  stroke: #9a9a9a;
  stroke-width: 1.800;
}
.home {
  width: 274px;
  height: 10px;
  margin: 45px auto 0;
  border-radius: 5px;
  background: #fff;
}
</style>
